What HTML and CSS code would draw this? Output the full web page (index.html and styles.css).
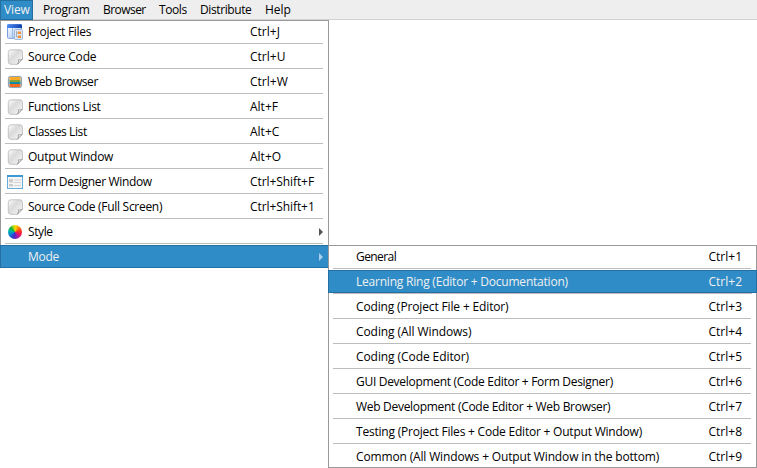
FILE: index.html
```
<!DOCTYPE html>
<html lang="en">
<head>
<meta charset="utf-8">
<title>View menu</title>
<link rel="stylesheet" href="styles.css">
</head>
<body>
<svg class="defs" width="0" height="0" aria-hidden="true">
  <defs>
    <linearGradient id="paper" x1="0" y1="0" x2="1" y2="1"><stop offset="0" stop-color="#fff"/><stop offset=".4" stop-color="#dadada"/><stop offset="1" stop-color="#fafafa"/></linearGradient>
    <linearGradient id="bar" x1="0" x2="1"><stop offset="0" stop-color="#4b8cf5"/><stop offset="1" stop-color="#0b3fae"/></linearGradient>
    <linearGradient id="pane" x1="0" y1="0" x2="1" y2="1"><stop offset="0" stop-color="#fff"/><stop offset="1" stop-color="#9fc0ee"/></linearGradient>
    <symbol id="page" viewBox="0 0 16 16">
      <path d="M4 .8h9a2.500 2.500 0 0 1 2.500 2.500v6.700L10.500 15.300H4A2.700 2.700 0 0 1 1.300 12.600V3.500A2.700 2.700 0 0 1 4 .8z" fill="url(#paper)" stroke="#b8b8b8" stroke-width=".8"/>
      <path d="M15.400 10c-1 .9-2.500 1-4 .8.200 1.700 0 3.500-1 4.400z" fill="#fff" stroke="#8e8e8e" stroke-width=".8"/>
    </symbol>
  </defs>
</svg>
<nav class="menubar">
  <span class="top active">View</span><span class="top program">Program</span><span class="top browser">Browser</span><span class="top tools">Tools</span><span class="top distribute">Distribute</span><span class="top">Help</span>
</nav>
<main class="menus">
  <div class="menu main">
    <div class="item"><svg class="icon" viewBox="0 0 16 16"><rect x=".5" y=".8" width="14" height="13.500" rx="1" fill="url(#pane)" stroke="#7ba0dc"/><path d="M0 1.300Q0 .300 1 .300h13q1 0 1 1V4H0z" fill="url(#bar)"/><path d="M5.500 4v10" stroke="#9bbcec"/><rect x="7.500" y="5.500" width="8" height="10" rx="1" fill="#dfe6f4" stroke="#8eabd8" stroke-width=".8"/><path d="M9.500 7v6h2M9.500 9h2" fill="none" stroke="#999" stroke-width=".7"/><path d="M11 7.500h3v2.500h-3zM11 11.500h3V14h-3z" fill="#f79239"/></svg><span class="label t30">Project Files</span><span class="key">Ctrl+J</span></div>
    <div class="item"><svg class="icon"><use href="#page"/></svg><span class="label t20">Source Code</span><span class="key">Ctrl+U</span></div>
    <div class="item"><svg class="icon" viewBox="0 0 16 16"><rect x="1.400" y="2.400" width="13.200" height="11.200" rx="2" fill="#cfdce6" stroke="#718697" stroke-width=".8"/><path d="M2.500 4q0-1 1-1h9q1 0 1 1v2h-11z" fill="#f7aa27"/><path d="M2.500 6h11v2h-11z" fill="#85a338"/><path d="M2.500 8h11v2h-11z" fill="#1787a3"/><path d="M2.500 10h11v2q0 1-1 1h-9q-1 0-1-1z" fill="#f16b20"/></svg><span class="label t45">Web Browser</span><span class="key">Ctrl+W</span></div>
    <div class="item"><svg class="icon"><use href="#page"/></svg><span class="label t30">Functions List</span><span class="key">Alt+F</span></div>
    <div class="item"><svg class="icon"><use href="#page"/></svg><span class="label t40">Classes List</span><span class="key">Alt+C</span></div>
    <div class="item"><svg class="icon"><use href="#page"/></svg><span class="label t25">Output Window</span><span class="key">Alt+O</span></div>
    <div class="item"><svg class="icon" viewBox="0 0 16 16"><rect x=".5" y="1.500" width="15" height="13" fill="#f5f5f5" stroke="#65acd9"/><path d="M0 1h16v2H0z" fill="#3f9ad4"/><path d="M2 5h4v3.500H2zM2 10h4v2.500H2z" fill="#ccc"/><path d="M7 6h7M7 8.500h7M7 11.500h7" fill="none" stroke="#ccc" stroke-width=".8"/></svg><span class="label t35">Form Designer Window</span><span class="key t10">Ctrl+Shift+F</span></div>
    <div class="item"><svg class="icon"><use href="#page"/></svg><span class="label t30">Source Code (Full Screen)</span><span class="key t10">Ctrl+Shift+1</span></div>
    <div class="item"><span class="icon wheel"></span><span class="label t40">Style</span><span class="arrow"></span></div>
    <div class="item selected"><span class="icon"></span><span class="label t25">Mode</span><span class="arrow"></span></div>
  </div>
  <div class="menu sub">
    <div class="item"><span class="label t57">General</span><span class="key">Ctrl+1</span></div>
    <div class="item selected"><span class="label t22">Learning Ring (Editor + Documentation)</span><span class="key">Ctrl+2</span></div>
    <div class="item"><span class="label t15">Coding (Project File + Editor)</span><span class="key">Ctrl+3</span></div>
    <div class="item"><span class="label t10">Coding (All Windows)</span><span class="key">Ctrl+4</span></div>
    <div class="item"><span class="label t10">Coding (Code Editor)</span><span class="key">Ctrl+5</span></div>
    <div class="item"><span class="label t30">GUI Development (Code Editor + Form Designer)</span><span class="key">Ctrl+6</span></div>
    <div class="item"><span class="label t30">Web Development (Code Editor + Web Browser)</span><span class="key">Ctrl+7</span></div>
    <div class="item"><span class="label t22">Testing (Project Files + Code Editor + Output Window)</span><span class="key">Ctrl+8</span></div>
    <div class="item"><span class="label t15">Common (All Windows + Output Window in the bottom)</span><span class="key">Ctrl+9</span></div>
  </div>
</main>
</body>
</html>
```
FILE: styles.css
```
* { box-sizing: border-box; }
body { margin: 0; height: 468px; overflow: hidden; background: #fff; color: #000; font: 12px/20px "Segoe UI", "Open Sans", "Noto Sans", sans-serif; white-space: nowrap; }
.defs { display: block; height: 0; }
.menubar { display: flex; height: 20px; background: #eee; border-bottom: 1px solid #d2d2d2; }
.top { height: 20px; }
.active { width: 33px; margin-right: 10px; padding-left: 3px; background: #308cc6; border: 1px solid #236f9f; line-height: 18px; letter-spacing: -.1px; color: #eff0f1; }
.program { width: 60px; letter-spacing: -.3px; }
.browser { width: 56px; letter-spacing: -.55px; }
.tools { width: 41px; letter-spacing: -.4px; }
.distribute { width: 65px; letter-spacing: -.4px; }
.menus { display: grid; grid-template-columns: 328px 429px; }
.menu { position: relative; }
.main { height: 248px; width: 329px; border: 1px solid #999; border-bottom: 0; }
.sub { margin-top: 225px; height: 223px; border: 1px solid #999; }
.item { display: flex; align-items: center; height: 25px; padding: 0 14px 2px 6px; background: linear-gradient(#bcbcbc, #bcbcbc) 4px 23px / calc(100% - 9px) 1px no-repeat; line-height: 22px; }
.item:first-child { margin-top: -1px; }
.main .item { padding-right: 4px; }
.icon { width: 16px; height: 16px; flex: none; margin-right: 5px; }
.label { flex: 1; }
.main .key { width: 74px; }
.sub .item { padding-left: 27px; }
.wheel { width: 14px; height: 14px; margin: 0 6px 0 1px; border-radius: 50%; background: conic-gradient(#ffe100, #ff9800 35deg, #ff3b18 75deg, #ee1557 115deg, #a11bb5 155deg, #3c2cc8 195deg, #1473dc 235deg, #00b4ae 275deg, #17b53a 315deg, #ffe100); }
.arrow { width: 0; height: 0; border: 4px solid transparent; border-left-color: #555; border-right: 0; margin-right: 1px; }
.item.selected { position: relative; height: 23px; background: #308cc6; color: #eff0f1; border: 1px solid #236f9f; padding-top: 0; padding-bottom: 0; }
.main .selected { margin: 0 0 0 -1px; padding-right: 4px; border-right: 0; }
.main .selected .arrow { border-left-color: #a6d0eb; }
.sub .selected { margin: 0 -1px 2px; }
.sub .selected::after { content: ""; position: absolute; left: 4px; right: 4px; top: 22px; height: 1px; background: #bcbcbc; }
.item:last-child { background-image: none; }
.t10 { letter-spacing: -.08px; }
.t15 { letter-spacing: -.15px; }
.t20 { letter-spacing: -.2px; }
.t22 { letter-spacing: -.215px; }
.t25 { letter-spacing: -.25px; }
.t30 { letter-spacing: -.295px; }
.t35 { letter-spacing: -.35px; }
.t40 { letter-spacing: -.4px; }
.t45 { letter-spacing: -.45px; }
.t57 { letter-spacing: -.57px; }
```
